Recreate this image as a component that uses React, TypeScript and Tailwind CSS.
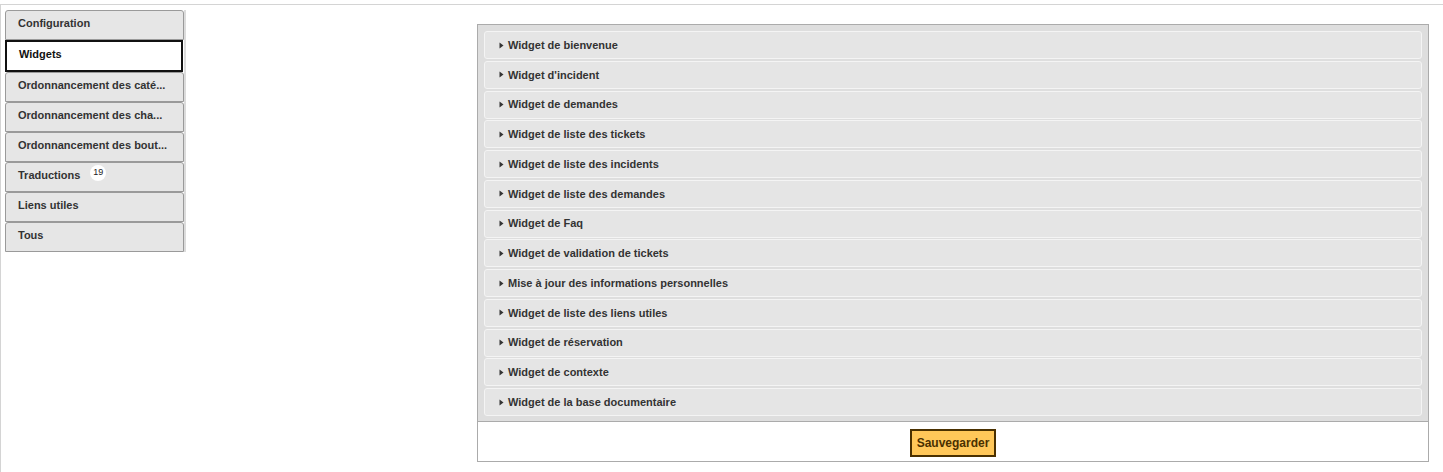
const tabs = [
  { label: 'Configuration' },
  { label: 'Widgets', active: true },
  { label: 'Ordonnancement des caté...' },
  { label: 'Ordonnancement des cha...' },
  { label: 'Ordonnancement des bout...' },
  { label: 'Traductions', badge: 19 },
  { label: 'Liens utiles' },
  { label: 'Tous' },
];

const widgets = [
  'Widget de bienvenue',
  "Widget d'incident",
  'Widget de demandes',
  'Widget de liste des tickets',
  'Widget de liste des incidents',
  'Widget de liste des demandes',
  'Widget de Faq',
  'Widget de validation de tickets',
  'Mise à jour des informations personnelles',
  'Widget de liste des liens utiles',
  'Widget de réservation',
  'Widget de contexte',
  'Widget de la base documentaire',
];

function Caret() {
  return (
    <svg width="5" height="7" viewBox="0 0 5 7" className="shrink-0">
      <path d="M0.5 0.5 L4.5 3.5 L0.5 6.5 Z" fill="#333" />
    </svg>
  );
}

export default function App() {
  return (
    <div className="w-[1443px] h-[472px] bg-white pt-1 font-['Liberation_Sans',Arial,sans-serif] text-[#333]">
      <div className="h-[468px] border-t border-l border-[#d4d4d4] flex items-start">
        {/* Tabs */}
        <div className="ml-1 mt-[5px] w-[181px] border-r-2 border-[#dcdcdc] flex flex-col">
          {tabs.map((t) =>
            t.active ? (
              <div
                key={t.label}
                className="h-[32px] w-[178px] bg-white border-2 border-[#111] flex items-center pl-[12px] pb-[4px] text-[11px] font-bold text-[#111]"
              >
                {t.label}
              </div>
            ) : (
              <div
                key={t.label}
                className="h-[30px] w-[179px] bg-[#e6e6e6] border border-[#9a9a9a] rounded-t-[3px] flex items-center pl-[12px] pb-[4px] text-[11px] font-bold text-[#333] whitespace-nowrap"
              >
                <span>{t.label}</span>
                {t.badge !== undefined && (
                  <span className="ml-[10px] -mt-[4px] w-[16px] h-[16px] rounded-full bg-white flex items-center justify-center text-[9px] font-normal text-[#222]">
                    {t.badge}
                  </span>
                )}
              </div>
            )
          )}
        </div>

        {/* Widgets panel */}
        <div className="ml-[291px] mt-[19px] w-[952px] border border-[#ababab] bg-[#dedede]">
          <div className="px-[6px] pt-[6px] pb-[5px] flex flex-col gap-[1.75px]">
            {widgets.map((w) => (
              <div
                key={w}
                className="h-[28px] bg-[#e5e5e5] border border-[#f4f4f4] rounded-[3px] flex items-center gap-[4px] pl-[14px] text-[11px] font-bold text-[#333]"
              >
                <Caret />
                <span>{w}</span>
              </div>
            ))}
          </div>
          <div className="h-[40px] bg-white border-t border-[#ababab] flex items-center justify-center pt-[2px]">
            <button className="h-[28px] px-[5px] bg-[#ffc759] border-2 border-[#4a3000] text-[12px] font-bold text-[#4a3000]">
              Sauvegarder
            </button>
          </div>
        </div>
      </div>
    </div>
  );
}
